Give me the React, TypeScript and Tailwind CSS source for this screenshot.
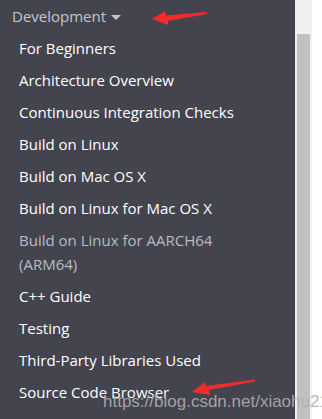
import React from "react";

const items: { label: string; dim?: boolean }[] = [
  { label: "For Beginners" },
  { label: "Architecture Overview" },
  { label: "Continuous Integration Checks" },
  { label: "Build on Linux" },
  { label: "Build on Mac OS X" },
  { label: "Build on Linux for Mac OS X" },
  { label: "Build on Linux for AARCH64 (ARM64)", dim: true },
  { label: "C++ Guide" },
  { label: "Testing" },
  { label: "Third-Party Libraries Used" },
  { label: "Source Code Browser" },
];

export default function App() {
  return (
    <div className="relative flex h-[419px] w-[322px] overflow-hidden bg-white">
      <div
        className="w-[295px] shrink-0 bg-[#44444f] text-[15px] leading-[24px]"
        style={{ fontFamily: '"Open Sans", "Noto Sans", sans-serif' }}
      >
        <div className="flex items-center px-[12px] py-[4px] text-[#c3c6d2]">
          <span>Development</span>
          <svg width="10" height="6" viewBox="0 0 10 6" className="ml-[5px] mt-[3px]">
            <path d="M0 0 L10 0 L5 5 Z" fill="#c3c6d2" />
          </svg>
        </div>
        <ul className="flex flex-col">
          {items.map((it) => (
            <li
              key={it.label}
              className={`py-[4px] pl-[19px] pr-[36px] ${it.dim ? "text-[#b9bbc6]" : "text-white"}`}
            >
              {it.label}
            </li>
          ))}
        </ul>
        <div className="px-[12px] py-[4px] text-[#c3c6d2]">Documentation</div>
      </div>
      <div className="flex w-[17px] shrink-0 flex-col bg-[#f0f0f0] pl-[2px] pr-[2px] pt-[34px]">
        <div className="h-full w-[13px] bg-[#c1c1c1]" />
      </div>
      <div className="flex-1 bg-white" />

      <div
        className="pointer-events-none absolute left-[103px] top-[392px] whitespace-nowrap text-[17px] leading-[20px] text-[#b0b0b0]/90"
        style={{ fontFamily: '"Liberation Sans", Arial, sans-serif' }}
      >
        https://blog.csdn.net/xiaohu21
      </div>

      <svg
        className="pointer-events-none absolute left-0 top-0"
        width="322"
        height="419"
        viewBox="0 0 322 419"
      >
        <path d="M152 19 L165 11 L166 15.5 L207 12 L207 14 L168 21 L168 25 Z" fill="#f42b2b" />
        <path d="M192 392 L205 382 L206 386 L255 379.5 L255 381.5 L209 390 L210 395 Z" fill="#f42b2b" />
      </svg>
    </div>
  );
}
